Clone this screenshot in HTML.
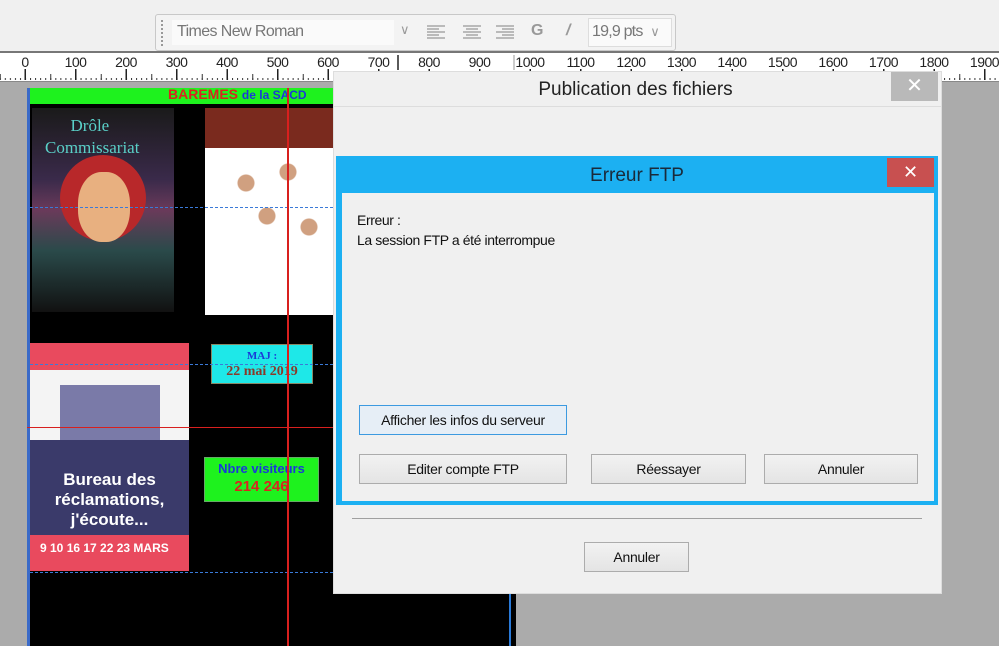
<!DOCTYPE html>
<html><head><meta charset="utf-8"><style>
*{margin:0;padding:0;box-sizing:border-box}
body{width:999px;height:646px;overflow:hidden;background:#ababab;position:relative;font-family:"Liberation Sans",sans-serif}
.a{position:absolute}
.btn{position:absolute;background:linear-gradient(#f2f2f2,#e4e4e4);border:1px solid #acacac;font-size:14px;color:#111;text-align:center;letter-spacing:-0.3px}
</style></head><body>
<div class="a" style="left:0;top:0;width:999px;height:52px;background:#f0f0f0"></div>
<div class="a" style="left:155px;top:14px;width:521px;height:37px;border:1px solid #c8c8c8;border-radius:3px;background:#f3f3f3"></div>
<div class="a" style="left:161px;top:20px;width:2px;height:26px;border-left:2px dotted #999"></div>
<div class="a" style="left:172px;top:20px;width:222px;height:25px;background:#fafafa;font-size:16px;color:#777;padding:3px 5px;letter-spacing:-0.6px">Times New Roman</div>
<div class="a" style="left:400px;top:22px;font-size:13px;color:#999">&#8744;</div>
<svg class="a" style="left:425px;top:24px" width="100" height="16"><g stroke="#999" stroke-width="1.3">
<path d="M2 2h18M2 5h12M2 8h18M2 11h12M2 14h18"/><path d="M38 2h18M41 5h12M38 8h18M41 11h12M38 14h18"/><path d="M71 2h18M77 5h12M71 8h18M77 11h12M71 14h18"/></g></svg>
<div class="a" style="left:531px;top:22px;font-size:16px;font-weight:bold;color:#999">G</div>
<div class="a" style="left:566px;top:22px;font-size:16px;font-style:italic;font-weight:bold;color:#999">/</div>
<div class="a" style="left:588px;top:18px;width:84px;height:29px;background:#fafafa;border:1px solid #ddd;font-size:16px;color:#777;padding:4px 3px;letter-spacing:-0.8px">19,9 pts <span style="font-size:13px;color:#999;margin-left:4px">&#8744;</span></div>
<div class="a" style="left:0;top:51px;width:999px;height:2px;background:#777"></div>
<svg class="a" style="left:0;top:53px" width="999" height="29">
<defs>
<pattern id="mi" patternUnits="userSpaceOnUse" x="25" y="0" width="5.05" height="29"><rect x="0" y="25" width="1" height="2" fill="#333"/></pattern>
<pattern id="md" patternUnits="userSpaceOnUse" x="25" y="0" width="25.25" height="29"><rect x="0" y="21" width="1" height="6" fill="#333"/></pattern>
<pattern id="mj" patternUnits="userSpaceOnUse" x="24.5" y="0" width="50.5" height="29"><rect x="0" y="16" width="1.5" height="11" fill="#222"/></pattern>
</defs>
<rect width="999" height="29" fill="#fff"/>
<rect x="0" width="999" height="29" fill="url(#mi)"/>
<rect x="0" width="999" height="29" fill="url(#md)"/>
<rect x="0" width="999" height="29" fill="url(#mj)"/>
<g font-family="Liberation Sans" font-size="14" fill="#222" text-anchor="middle" letter-spacing="-0.5">
<text x="25" y="14">0</text><text x="75.5" y="14">100</text><text x="126" y="14">200</text><text x="176.5" y="14">300</text><text x="227" y="14">400</text><text x="277.5" y="14">500</text><text x="328" y="14">600</text><text x="378.5" y="14">700</text><text x="429" y="14">800</text><text x="479.5" y="14">900</text><text x="530" y="14">1000</text><text x="580.5" y="14">1100</text><text x="631" y="14">1200</text><text x="681.5" y="14">1300</text><text x="732" y="14">1400</text><text x="782.5" y="14">1500</text><text x="833" y="14">1600</text><text x="883.5" y="14">1700</text><text x="934" y="14">1800</text><text x="984.5" y="14">1900</text>
</g>
<line x1="398" y1="2" x2="398" y2="17" stroke="#222" stroke-width="1.5"/><line x1="514" y1="2" x2="514" y2="17" stroke="#999"/>
<line x1="0" y1="28.5" x2="999" y2="28.5" stroke="#888"/>
</svg>
<div class="a" style="left:27px;top:88px;width:489px;height:558px;background:#000"></div>
<div class="a" style="left:27px;top:88px;width:3px;height:558px;background:#3a6ac8"></div>
<div class="a" style="left:509px;top:88px;width:2px;height:558px;background:#2a7ad8"></div>
<div class="a" style="left:30px;top:88px;width:303px;height:16px;background:#1ef21e;font-size:14px;font-weight:bold;color:#d8261e;padding-left:138px;line-height:12px;overflow:hidden;white-space:nowrap">BAREMES <span style="color:#1a3ad8;font-size:12px">de la SACD</span></div>
<div class="a" style="left:32px;top:108px;width:142px;height:204px;background:linear-gradient(#1a1a1a,#3a2a4a 35%,#6a3a5a 50%,#2a4a4a 70%,#111)"></div>
<div class="a" style="left:60px;top:155px;width:86px;height:86px;border-radius:50%;background:#b8282a"></div>
<div class="a" style="left:78px;top:172px;width:52px;height:70px;border-radius:45%;background:#e8b080"></div>
<div class="a" style="left:45px;top:115px;font-size:17px;color:#5ad0c8;font-family:'Liberation Serif',serif;line-height:22px">&nbsp;&nbsp;&nbsp;&nbsp;&nbsp;&nbsp;Drôle<br>Commissariat</div>
<div class="a" style="left:205px;top:108px;width:128px;height:207px;background:#fff"></div>
<div class="a" style="left:205px;top:108px;width:128px;height:40px;background:#7a2a1e"></div>
<div class="a" style="left:225px;top:150px;width:105px;height:110px;background:radial-gradient(circle at 20% 30%,#d0a080 8px,transparent 9px),radial-gradient(circle at 60% 20%,#d0a080 8px,transparent 9px),radial-gradient(circle at 40% 60%,#d0a080 8px,transparent 9px),radial-gradient(circle at 80% 70%,#d0a080 8px,transparent 9px)"></div>
<div class="a" style="left:30px;top:343px;width:159px;height:228px;background:#e94a5e"></div>
<div class="a" style="left:30px;top:370px;width:159px;height:70px;background:#f4f4f4"></div>
<div class="a" style="left:60px;top:385px;width:100px;height:60px;background:#7a7aa8"></div>
<div class="a" style="left:30px;top:440px;width:159px;height:95px;background:#3a3a6a;color:#fff;font-weight:bold;font-size:17px;text-align:center;line-height:20px;padding-top:30px">Bureau des<br>réclamations,<br>j'écoute...</div>
<div class="a" style="left:40px;top:541px;font-size:12px;font-weight:bold;color:#fff">9 10 16 17 22 23 MARS</div>
<div class="a" style="left:211px;top:344px;width:102px;height:40px;background:#1ee8e8;border:1px solid #886;font-family:'Liberation Serif',serif;font-weight:bold;color:#8a3a2a;text-align:center;font-size:14px;line-height:16px;padding-top:3px"><span style="color:#1a3ad8;font-size:11px">MAJ :</span><br>22 mai 2019</div>
<div class="a" style="left:204px;top:457px;width:115px;height:45px;background:#1ef21e;border:1px solid #6a6;font-weight:bold;text-align:center;line-height:18px;padding-top:2px"><span style="color:#1a3ad8;font-size:13px">Nbre visiteurs</span><br><span style="color:#d8261e;font-size:15px">214 246</span></div>
<div class="a" style="left:30px;top:207px;width:303px;border-top:1px dashed #3a7ad8"></div>
<div class="a" style="left:30px;top:364px;width:303px;border-top:1px dashed #3a7ad8"></div>
<div class="a" style="left:30px;top:572px;width:303px;border-top:1px dashed #3a7ad8"></div>
<div class="a" style="left:287px;top:88px;width:2px;height:558px;background:#d8201e"></div>
<div class="a" style="left:27px;top:427px;width:306px;height:1px;background:#d8201e"></div>
<div class="a" style="left:333px;top:71px;width:609px;height:523px;background:#f0f0f0;border:1px solid #ddd"></div>
<div class="a" style="left:334px;top:72px;width:607px;height:35px;border-bottom:1px solid #ddd;text-align:center;font-size:19px;color:#222;line-height:36px;padding-right:4px">Publication des fichiers</div>
<div class="a" style="left:891px;top:72px;width:47px;height:29px;background:#b9b9b9;color:#fff;font-size:20px;text-align:center;line-height:29px">✕</div>
<div class="a" style="left:336px;top:156px;width:602px;height:349px;background:#1cb0f2"></div>
<div class="a" style="left:336px;top:156px;width:602px;height:37px;text-align:center;font-size:19px;color:#1a2a3a;line-height:40px">Erreur FTP</div>
<div class="a" style="left:887px;top:158px;width:47px;height:29px;background:#c85050;color:#fff;font-size:18px;text-align:center;line-height:29px">✕</div>
<div class="a" style="left:342px;top:193px;width:592px;height:308px;background:#f0f0f0"></div>
<div class="a" style="left:357px;top:210px;font-size:14px;color:#111;line-height:20px;letter-spacing:-0.4px">Erreur :<br>La session FTP a été interrompue</div>
<div class="btn" style="left:359px;top:405px;width:208px;height:30px;border-color:#3c9ae0;line-height:29px;background:#e6eef6">Afficher les infos du serveur</div>
<div class="btn" style="left:359px;top:454px;width:208px;height:30px;line-height:29px">Editer compte FTP</div>
<div class="btn" style="left:591px;top:454px;width:155px;height:30px;line-height:29px">Réessayer</div>
<div class="btn" style="left:764px;top:454px;width:154px;height:30px;line-height:29px">Annuler</div>
<div class="a" style="left:352px;top:518px;width:570px;height:1px;background:#a0a0a0"></div>
<div class="btn" style="left:584px;top:542px;width:105px;height:30px;line-height:29px">Annuler</div>
</body></html>
